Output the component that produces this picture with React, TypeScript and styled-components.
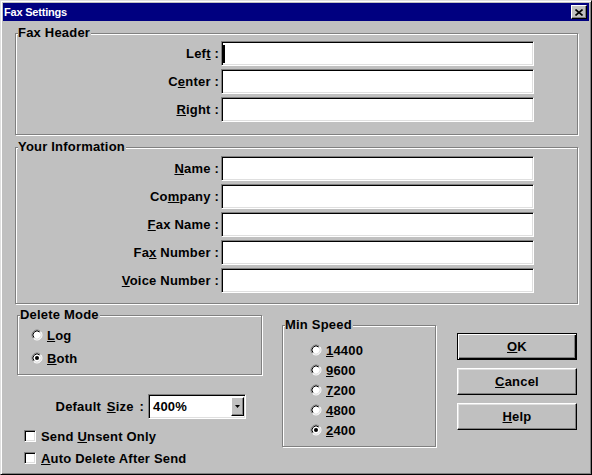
import styled, { createGlobalStyle } from "styled-components";

const GlobalStyle = createGlobalStyle`
  html, body {
    margin: 0;
    padding: 0;
    background: #c0c0c0;
  }
  body {
    font-family: "Liberation Sans", Arial, sans-serif;
    font-size: 13px;
    font-weight: bold;
    letter-spacing: 0.2px;
    color: #000;
  }
  * {
    box-sizing: border-box;
  }
  u {
    text-underline-offset: 1px;
  }
`;

const Window = styled.div`
  width: 592px;
  height: 475px;
  background: #c0c0c0;
  border: 1px solid;
  border-color: #dfdfdf #000 #000 #dfdfdf;
  box-shadow: inset 1px 1px 0 #fff, inset -1px -1px 0 #808080;
  padding: 2px;
  display: flex;
  flex-direction: column;
`;

const TitleBar = styled.div`
  height: 18px;
  background: #000080;
  color: #fff;
  display: flex;
  align-items: center;
  justify-content: space-between;
  padding: 0 2px 0 1px;
`;

const Title = styled.span`
  font-size: 11px;
  letter-spacing: -0.2px;
`;

const CloseButton = styled.div`
  width: 16px;
  height: 14px;
  background: #c0c0c0;
  border: 1px solid;
  border-color: #fff #000 #000 #fff;
  box-shadow: inset -1px -1px 0 #808080;
  display: flex;
  align-items: center;
  justify-content: center;
`;

const Body = styled.div`
  display: flex;
  flex-direction: column;
  padding: 12px 11px 0 12px;
`;

const Group = styled.div<{ $pad: string; $gap: number }>`
  position: relative;
  border: 1px solid #808080;
  box-shadow: inset 1px 1px 0 #fff, 1px 1px 0 #fff;
  padding: ${(p) => p.$pad};
  display: flex;
  flex-direction: column;
  gap: ${(p) => p.$gap}px;
`;

const Legend = styled.span`
  position: absolute;
  top: -9px;
  left: 2px;
  line-height: 15px;
  padding-right: 1px;
  background: #c0c0c0;
  white-space: nowrap;
`;

const FieldRow = styled.div`
  display: flex;
  align-items: center;
  height: 25px;
`;

const FieldLabel = styled.span`
  width: 203px;
  margin-right: 2px;
  text-align: right;
  white-space: nowrap;
`;

const Field = styled.div<{ $width: number }>`
  width: ${(p) => p.$width}px;
  height: 25px;
  flex-shrink: 0;
  background: #fff;
  border: 1px solid;
  border-color: #808080 #fff #fff #808080;
  box-shadow: inset 1px 1px 0 #000, inset -1px -1px 0 #dfdfdf;
  display: flex;
  align-items: center;
  padding: 0 1px;
`;

const Caret = styled.span`
  width: 2px;
  height: 18px;
  background: #000;
`;

const BottomRow = styled.div`
  display: flex;
  align-items: flex-start;
  margin-top: 11px;
  padding-left: 2px;
`;

const LeftCol = styled.div`
  width: 245px;
  flex-shrink: 0;
  display: flex;
  flex-direction: column;
`;

const OptionRow = styled.label`
  display: flex;
  align-items: center;
  height: 16px;
  gap: 4px;
  white-space: nowrap;
`;

const SizeRow = styled.div`
  display: flex;
  align-items: center;
  justify-content: flex-end;
  margin-top: 19px;
  padding-right: 16px;
`;

const SizeLabel = styled.span`
  margin-right: 4px;
  white-space: nowrap;
  word-spacing: 2px;
`;

const ComboText = styled.span`
  padding-left: 3px;
`;

const ComboButton = styled.div`
  margin-left: auto;
  width: 13px;
  height: 19px;
  background: #c0c0c0;
  border: 1px solid;
  border-color: #fff #000 #000 #fff;
  box-shadow: inset -1px -1px 0 #808080;
  display: flex;
  align-items: center;
  justify-content: center;
`;

const CheckList = styled.div`
  display: flex;
  flex-direction: column;
  gap: 6px;
  margin-top: 9px;
  padding-left: 7px;
`;

const CheckBox = styled.span`
  width: 12px;
  height: 12px;
  margin-right: 1px;
  background: #fff;
  border: 1px solid;
  border-color: #808080 #fff #fff #808080;
  box-shadow: inset 1px 1px 0 #000, inset -1px -1px 0 #dfdfdf;
`;

const SpeedCol = styled.div`
  width: 154px;
  flex-shrink: 0;
  margin: 10px 0 0 20px;
`;

const ButtonCol = styled.div`
  width: 120px;
  flex-shrink: 0;
  margin: 18px 0 0 21px;
  display: flex;
  flex-direction: column;
  gap: 8px;
`;

const Button = styled.div<{ $default?: boolean }>`
  height: 27px;
  display: flex;
  align-items: center;
  justify-content: center;
  background: #c0c0c0;
  border: 1px solid;
  border-color: ${(p) => (p.$default ? "#000" : "#fff #000 #000 #fff")};
  box-shadow: ${(p) =>
    p.$default
      ? "inset 1px 1px 0 #fff, inset -1px -1px 0 #000, inset -2px -2px 0 #808080"
      : "inset -1px -1px 0 #808080, inset 1px 1px 0 #dfdfdf"};
`;

const Radio = ({ checked }: { checked?: boolean }) => (
  <svg width="12" height="12" viewBox="0 0 12 12">
    <circle cx="6" cy="6" r="4.5" fill="#fff" />
    <path d="M2.46 9.54 A5 5 0 0 1 9.54 2.46" stroke="#808080" fill="none" />
    <path d="M9.54 2.46 A5 5 0 0 1 2.46 9.54" stroke="#fff" fill="none" />
    <path d="M3.17 8.83 A4 4 0 0 1 8.83 3.17" stroke="#000" fill="none" />
    <path d="M8.83 3.17 A4 4 0 0 1 3.17 8.83" stroke="#dfdfdf" fill="none" />
    {checked && <circle cx="6" cy="6" r="2" fill="#000" />}
  </svg>
);

const headerFields = [
  { label: <>Lef<u>t</u> :</>, caret: true },
  { label: <>C<u>e</u>nter :</> },
  { label: <><u>R</u>ight :</> },
];

const infoFields = [
  { label: <><u>N</u>ame :</> },
  { label: <>Co<u>m</u>pany :</> },
  { label: <><u>F</u>ax Name :</> },
  { label: <>Fa<u>x</u> Number :</> },
  { label: <><u>V</u>oice Number :</> },
];

const speeds = [
  { first: "1", rest: "4400" },
  { first: "9", rest: "600" },
  { first: "7", rest: "200" },
  { first: "4", rest: "800" },
  { first: "2", rest: "400", checked: true },
];

export default function App() {
  return (
    <>
      <GlobalStyle />
      <Window>
        <TitleBar>
          <Title>Fax Settings</Title>
          <CloseButton>
            <svg width="8" height="7" viewBox="0 0 8 7">
              <path d="M0.5 0.5 L7.5 6.5 M7.5 0.5 L0.5 6.5" stroke="#000" strokeWidth="1.6" />
            </svg>
          </CloseButton>
        </TitleBar>
        <Body>
          <Group $pad="7px 0 12px" $gap={3}>
            <Legend>Fax Header</Legend>
            {headerFields.map((f, i) => (
              <FieldRow key={i}>
                <FieldLabel>{f.label}</FieldLabel>
                <Field $width={313}>{f.caret && <Caret />}</Field>
              </FieldRow>
            ))}
          </Group>
          <Group $pad="8px 0 10px" $gap={3} style={{ marginTop: 12 }}>
            <Legend>Your Information</Legend>
            {infoFields.map((f, i) => (
              <FieldRow key={i}>
                <FieldLabel>{f.label}</FieldLabel>
                <Field $width={313} />
              </FieldRow>
            ))}
          </Group>
          <BottomRow>
            <LeftCol>
              <Group $pad="11px 0 8px 13px" $gap={7}>
                <Legend>Delete Mode</Legend>
                <OptionRow>
                  <Radio />
                  <span>
                    <u>L</u>og
                  </span>
                </OptionRow>
                <OptionRow>
                  <Radio checked />
                  <span>
                    <u>B</u>oth
                  </span>
                </OptionRow>
              </Group>
              <SizeRow>
                <SizeLabel>
                  Default <u>S</u>ize :
                </SizeLabel>
                <Field $width={98}>
                  <ComboText>400%</ComboText>
                  <ComboButton>
                    <svg width="5" height="3" viewBox="0 0 5 3">
                      <path d="M0 0 H5 L2.5 3 Z" fill="#000" />
                    </svg>
                  </ComboButton>
                </Field>
              </SizeRow>
              <CheckList>
                <OptionRow>
                  <CheckBox />
                  <span>
                    Send <u>U</u>nsent Only
                  </span>
                </OptionRow>
                <OptionRow>
                  <CheckBox />
                  <span>
                    <u>A</u>uto Delete After Send
                  </span>
                </OptionRow>
              </CheckList>
            </LeftCol>
            <SpeedCol>
              <Group $pad="16px 0 8px 27px" $gap={4}>
                <Legend>Min Speed</Legend>
                {speeds.map((s) => (
                  <OptionRow key={s.first + s.rest}>
                    <Radio checked={s.checked} />
                    <span>
                      <u>{s.first}</u>
                      {s.rest}
                    </span>
                  </OptionRow>
                ))}
              </Group>
            </SpeedCol>
            <ButtonCol>
              <Button $default>
                <span>
                  <u>O</u>K
                </span>
              </Button>
              <Button>
                <span>
                  <u>C</u>ancel
                </span>
              </Button>
              <Button>
                <span>
                  <u>H</u>elp
                </span>
              </Button>
            </ButtonCol>
          </BottomRow>
        </Body>
      </Window>
    </>
  );
}
